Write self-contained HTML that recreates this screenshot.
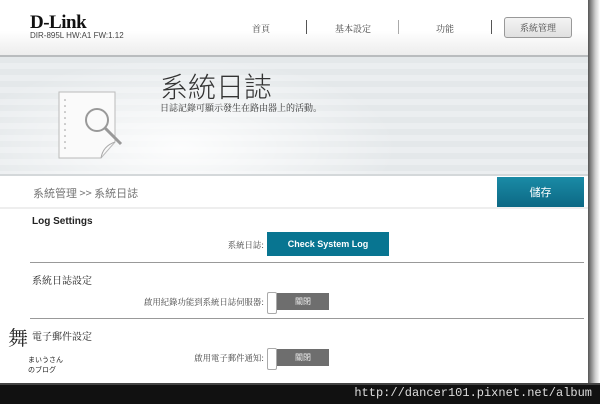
<!DOCTYPE html>
<html><head><meta charset="utf-8"><style>
*{margin:0;padding:0;box-sizing:border-box}
body{width:600px;height:404px;overflow:hidden;background:#fff;position:relative;font-family:"Liberation Sans","Noto Sans CJK TC",sans-serif;color:#333}
.a{position:absolute}
.cjk{font-family:"Noto Serif CJK SC","Noto Sans CJK TC",serif}
.lbl{position:absolute;text-align:right;white-space:nowrap;font-size:8.4px;color:#444}
</style></head><body>
<div class="a" style="left:0;top:0;width:588px;height:56px;background:linear-gradient(#fff 0%,#fff 55%,#ececec 100%)"></div>
<div class="a" style="left:0;top:55px;width:588px;height:2px;background:#b9bcbe"></div>
<div class="a" style="left:30px;top:12px;font:bold 19px 'Liberation Serif',serif;color:#111;letter-spacing:-0.5px">D-Link</div>
<div class="a" style="left:30px;top:31px;font-size:8px;color:#444">DIR-895L HW:A1 FW:1.12</div>
<div class="a cjk" style="left:252px;top:22px;font-size:9px;color:#444">首頁</div>
<div class="a" style="left:306px;top:20px;width:1px;height:14px;background:#555"></div>
<div class="a cjk" style="left:335px;top:22px;font-size:9px;color:#444">基本設定</div>
<div class="a" style="left:398px;top:20px;width:1px;height:14px;background:#aaa"></div>
<div class="a cjk" style="left:436px;top:22px;font-size:9px;color:#444">功能</div>
<div class="a" style="left:491px;top:20px;width:1px;height:14px;background:#555"></div>
<div class="a cjk" style="left:504px;top:17px;width:68px;height:21px;border:1px solid #999;border-radius:3px;background:linear-gradient(#f4f4f4,#e0e0e0);font-size:9px;color:#444;text-align:center;line-height:19px">系統管理</div>
<div class="a" style="left:0;top:57px;width:588px;height:118px;background:repeating-linear-gradient(#e4e8ea 0 6px,#ebeef0 6px 12px)"></div>
<div class="a" style="left:0;top:57px;width:400px;height:118px;background:radial-gradient(ellipse at 180px 90px,rgba(255,255,255,.9),rgba(255,255,255,0) 70%)"></div>
<div class="a" style="left:0;top:174px;width:588px;height:2px;background:#d4d8da"></div>
<svg class="a" style="left:55px;top:88px" width="70" height="72" viewBox="0 0 70 72">
<path d="M4 4 H60 V54 L46 70 H4 Z" fill="#fafafa" stroke="#bbb" stroke-width="1"/>
<path d="M46 70 Q48 58 60 54" fill="none" stroke="#aaa"/>
<g fill="#999"><circle cx="10" cy="12" r=".8"/><circle cx="10" cy="18" r=".8"/><circle cx="10" cy="24" r=".8"/><circle cx="10" cy="30" r=".8"/><circle cx="10" cy="36" r=".8"/><circle cx="10" cy="42" r=".8"/><circle cx="10" cy="48" r=".8"/><circle cx="10" cy="54" r=".8"/><circle cx="10" cy="60" r=".8"/></g>
<circle cx="42" cy="32" r="11" fill="none" stroke="#999" stroke-width="2"/>
<path d="M50 40 L66 56" stroke="#999" stroke-width="3"/>
</svg>
<div class="a" style="left:160px;top:66px;font-size:28px;color:#333;font-family:'Noto Sans CJK TC',sans-serif;font-weight:300">系統日誌</div>
<div class="a cjk" style="left:160px;top:101px;font-size:9px;color:#333">日誌記錄可顯示發生在路由器上的活動。</div>
<div class="a" style="left:33px;top:185px;font-size:11px;color:#777;font-family:'Noto Sans CJK TC',sans-serif">系統管理 &gt;&gt; 系統日誌</div>
<div class="a" style="left:497px;top:177px;width:87px;height:31px;background:linear-gradient(#1a8ba6,#0c6783);color:#fff;font-size:11px;text-align:center;line-height:31px;font-family:'Noto Sans CJK TC',sans-serif">儲存</div>
<div class="a" style="left:0;top:207px;width:588px;height:2px;background:#eee"></div>
<div class="a" style="left:32px;top:216px;font-size:10px;font-weight:bold;color:#222">Log Settings</div>
<div class="lbl cjk" style="right:336px;top:239px">系統日誌:</div>
<div class="a" style="left:267px;top:232px;width:122px;height:24px;background:#087591;color:#fff;font-size:9px;font-weight:bold;text-align:center;line-height:24px">Check System Log</div>
<div class="a" style="left:30px;top:262px;width:554px;height:1px;background:#999"></div>
<div class="a cjk" style="left:32px;top:272px;font-size:10px;color:#222">系統日誌設定</div>
<div class="lbl cjk" style="right:336px;top:296px">啟用紀錄功能到系統日誌伺服器:</div>
<div class="a" style="left:277px;top:293px;width:52px;height:17px;background:#6e6e6e;color:#eee;font-size:8px;text-align:center;line-height:17px;font-family:'Noto Sans CJK TC',sans-serif">關閉</div>
<div class="a" style="left:267px;top:292px;width:10px;height:22px;background:#fff;border:1px solid #aaa;border-radius:2px"></div>
<div class="a" style="left:30px;top:318px;width:554px;height:1px;background:#999"></div>
<div class="a cjk" style="left:32px;top:328px;font-size:10px;color:#222">電子郵件設定</div>
<div class="lbl cjk" style="right:336px;top:352px">啟用電子郵件通知:</div>
<div class="a" style="left:277px;top:349px;width:52px;height:17px;background:#6e6e6e;color:#eee;font-size:8px;text-align:center;line-height:17px;font-family:'Noto Sans CJK TC',sans-serif">關閉</div>
<div class="a" style="left:267px;top:348px;width:10px;height:22px;background:#fff;border:1px solid #aaa;border-radius:2px"></div>
<div class="a" style="left:8px;top:325px;width:24px;height:55px;font-size:20px;color:#222;font-family:'Noto Serif CJK SC',serif;line-height:24px">舞</div>
<div class="a" style="left:28px;top:355px;font-size:7px;color:#222">まいうさん<br>のブログ</div>
<div class="a" style="left:588px;top:0;width:12px;height:404px;background:linear-gradient(90deg,#555,#ccc 60%,#fff)"></div>
<div class="a" style="left:0;top:383px;width:600px;height:21px;background:#111"></div>
<div class="a" style="left:0;top:383px;width:600px;height:2px;background:#444"></div>
<div class="a" style="right:8px;top:386px;font:12px 'Liberation Mono',monospace;color:#ddd">http://dancer101.pixnet.net/album</div>
</body></html>
